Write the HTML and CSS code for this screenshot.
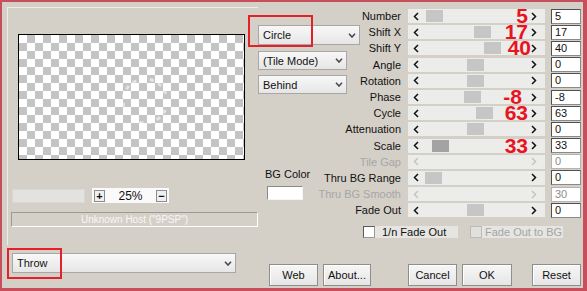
FILE: index.html
```html
<!DOCTYPE html>
<html lang="en">

<head>
    <meta charset="UTF-8">
    <title>Throw - Circle</title>
    <link rel="stylesheet" href="styles.css">
</head>

<body>

    <div class="dialog">
        <div class="left">
            <div class="panel">
                <div class="preview">
                    <svg class="preview-fx" width="225" height="124" viewBox="0 0 225 124">
                        <circle cx="126" cy="66" r="22" fill="none" stroke="#ffffff" stroke-opacity="0.55"
                            stroke-width="3" stroke-dasharray="4 5"></circle>
                    </svg>
                </div>
                <div class="zoom-row">
                    <div class="zoom-slider"></div>
                    <div class="zoom-field">
                        <span class="zoom-btn">+</span>
                        <span class="zoom-value">25%</span>
                        <span class="zoom-btn">&minus;</span>
                    </div>
                </div>
                <div class="host">Unknown Host ("9PSP")</div>
            </div>
            <div class="select select-throw">
                <span>Throw</span>
                <svg class="chev" width="8" height="5" viewBox="0 0 8 5"><path d="M1 0.8 L4 4 L7 0.8"></path></svg>
                <span class="mark mark-throw"></span>
            </div>
        </div>

        <div class="right">
            <div class="top">
                <div class="mid">
                    <div class="select select-circle">
                        <span>Circle</span>
                        <svg class="chev" width="8" height="5" viewBox="0 0 8 5"><path d="M1 0.8 L4 4 L7 0.8"></path></svg>
                        <span class="mark mark-circle"></span>
                    </div>
                    <div class="select select-small select-tile">
                        <span>(Tile Mode)</span>
                        <svg class="chev" width="8" height="5" viewBox="0 0 8 5"><path d="M1 0.8 L4 4 L7 0.8"></path></svg>
                    </div>
                    <div class="select select-small select-behind">
                        <span>Behind</span>
                        <svg class="chev" width="8" height="5" viewBox="0 0 8 5"><path d="M1 0.8 L4 4 L7 0.8"></path></svg>
                    </div>
                    <div class="bgcolor">
                        <div class="bgcolor-label">BG Color</div>
                        <div class="bgcolor-box"></div>
                    </div>
                </div>

                <div class="params">
                    <div class="lbl">Number</div>
                    <div class="track">
                        <svg class="arr arr-l" width="6" height="9" viewBox="0 0 6 9"><path d="M5 1 L1.5 4.5 L5 8"></path></svg>
                        <div class="track-mid"><span class="thumb" style="margin-left:7px"></span></div>
                        <svg class="arr arr-r" width="6" height="9" viewBox="0 0 6 9"><path d="M1 1 L4.5 4.5 L1 8"></path></svg>
                        <span class="note">5</span>
                    </div>
                    <div class="val">5</div>

                    <div class="lbl">Shift X</div>
                    <div class="track">
                        <svg class="arr arr-l" width="6" height="9" viewBox="0 0 6 9"><path d="M5 1 L1.5 4.5 L5 8"></path></svg>
                        <div class="track-mid"><span class="thumb" style="margin-left:55px"></span></div>
                        <svg class="arr arr-r" width="6" height="9" viewBox="0 0 6 9"><path d="M1 1 L4.5 4.5 L1 8"></path></svg>
                        <span class="note">17</span>
                    </div>
                    <div class="val">17</div>

                    <div class="lbl">Shift Y</div>
                    <div class="track">
                        <svg class="arr arr-l" width="6" height="9" viewBox="0 0 6 9"><path d="M5 1 L1.5 4.5 L5 8"></path></svg>
                        <div class="track-mid"><span class="thumb" style="margin-left:65px"></span></div>
                        <svg class="arr arr-r" width="6" height="9" viewBox="0 0 6 9"><path d="M1 1 L4.5 4.5 L1 8"></path></svg>
                        <span class="note note-far">40</span>
                    </div>
                    <div class="val">40</div>

                    <div class="lbl">Angle</div>
                    <div class="track">
                        <svg class="arr arr-l" width="6" height="9" viewBox="0 0 6 9"><path d="M5 1 L1.5 4.5 L5 8"></path></svg>
                        <div class="track-mid"><span class="thumb" style="margin-left:48px"></span></div>
                        <svg class="arr arr-r" width="6" height="9" viewBox="0 0 6 9"><path d="M1 1 L4.5 4.5 L1 8"></path></svg>
                    </div>
                    <div class="val">0</div>

                    <div class="lbl">Rotation</div>
                    <div class="track">
                        <svg class="arr arr-l" width="6" height="9" viewBox="0 0 6 9"><path d="M5 1 L1.5 4.5 L5 8"></path></svg>
                        <div class="track-mid"><span class="thumb" style="margin-left:48px"></span></div>
                        <svg class="arr arr-r" width="6" height="9" viewBox="0 0 6 9"><path d="M1 1 L4.5 4.5 L1 8"></path></svg>
                    </div>
                    <div class="val">0</div>

                    <div class="lbl">Phase</div>
                    <div class="track">
                        <svg class="arr arr-l" width="6" height="9" viewBox="0 0 6 9"><path d="M5 1 L1.5 4.5 L5 8"></path></svg>
                        <div class="track-mid"><span class="thumb" style="margin-left:45px"></span></div>
                        <svg class="arr arr-r" width="6" height="9" viewBox="0 0 6 9"><path d="M1 1 L4.5 4.5 L1 8"></path></svg>
                        <span class="note note-near">-8</span>
                    </div>
                    <div class="val">-8</div>

                    <div class="lbl">Cycle</div>
                    <div class="track">
                        <svg class="arr arr-l" width="6" height="9" viewBox="0 0 6 9"><path d="M5 1 L1.5 4.5 L5 8"></path></svg>
                        <div class="track-mid"><span class="thumb" style="margin-left:57px"></span></div>
                        <svg class="arr arr-r" width="6" height="9" viewBox="0 0 6 9"><path d="M1 1 L4.5 4.5 L1 8"></path></svg>
                        <span class="note">63</span>
                    </div>
                    <div class="val">63</div>

                    <div class="lbl">Attenuation</div>
                    <div class="track">
                        <svg class="arr arr-l" width="6" height="9" viewBox="0 0 6 9"><path d="M5 1 L1.5 4.5 L5 8"></path></svg>
                        <div class="track-mid"><span class="thumb" style="margin-left:48px"></span></div>
                        <svg class="arr arr-r" width="6" height="9" viewBox="0 0 6 9"><path d="M1 1 L4.5 4.5 L1 8"></path></svg>
                    </div>
                    <div class="val">0</div>

                    <div class="lbl">Scale</div>
                    <div class="track">
                        <svg class="arr arr-l" width="6" height="9" viewBox="0 0 6 9"><path d="M5 1 L1.5 4.5 L5 8"></path></svg>
                        <div class="track-mid"><span class="thumb thumb-focus" style="margin-left:13px"></span></div>
                        <svg class="arr arr-r" width="6" height="9" viewBox="0 0 6 9"><path d="M1 1 L4.5 4.5 L1 8"></path></svg>
                        <span class="note">33</span>
                    </div>
                    <div class="val">33</div>

                    <div class="lbl off">Tile Gap</div>
                    <div class="track off">
                        <svg class="arr arr-l" width="6" height="9" viewBox="0 0 6 9"><path d="M5 1 L1.5 4.5 L5 8"></path></svg>
                        <div class="track-mid"></div>
                        <svg class="arr arr-r" width="6" height="9" viewBox="0 0 6 9"><path d="M1 1 L4.5 4.5 L1 8"></path></svg>
                    </div>
                    <div class="val off">0</div>

                    <div class="lbl">Thru BG Range</div>
                    <div class="track">
                        <svg class="arr arr-l" width="6" height="9" viewBox="0 0 6 9"><path d="M5 1 L1.5 4.5 L5 8"></path></svg>
                        <div class="track-mid"><span class="thumb" style="margin-left:6px"></span></div>
                        <svg class="arr arr-r" width="6" height="9" viewBox="0 0 6 9"><path d="M1 1 L4.5 4.5 L1 8"></path></svg>
                    </div>
                    <div class="val">0</div>

                    <div class="lbl off">Thru BG Smooth</div>
                    <div class="track off">
                        <svg class="arr arr-l" width="6" height="9" viewBox="0 0 6 9"><path d="M5 1 L1.5 4.5 L5 8"></path></svg>
                        <div class="track-mid"></div>
                        <svg class="arr arr-r" width="6" height="9" viewBox="0 0 6 9"><path d="M1 1 L4.5 4.5 L1 8"></path></svg>
                    </div>
                    <div class="val off">30</div>

                    <div class="lbl">Fade Out</div>
                    <div class="track">
                        <svg class="arr arr-l" width="6" height="9" viewBox="0 0 6 9"><path d="M5 1 L1.5 4.5 L5 8"></path></svg>
                        <div class="track-mid"><span class="thumb" style="margin-left:48px"></span></div>
                        <svg class="arr arr-r" width="6" height="9" viewBox="0 0 6 9"><path d="M1 1 L4.5 4.5 L1 8"></path></svg>
                    </div>
                    <div class="val">0</div>
                </div>
            </div>

            <div class="checks">
                <span class="cb"></span>
                <span class="cb-label">1/n Fade Out</span>
                <span class="cb cb-off"></span>
                <span class="cb-label cb-label-off">Fade Out to BG</span>
            </div>

            <div class="buttons">
                <button class="btn btn-web">Web</button>
                <button class="btn btn-about">About...</button>
                <button class="btn btn-cancel">Cancel</button>
                <button class="btn btn-ok">OK</button>
                <button class="btn btn-reset">Reset</button>
            </div>
        </div>
    </div>

</body>

</html>
```

FILE: styles.css
```css
* {
    margin: 0;
    padding: 0;
    box-sizing: border-box;
}

body {
    font-family: "Liberation Sans", Arial, sans-serif;
    font-size: 11px;
    color: #111;
    background-color: #d4d0c8;
}

.dialog {
    width: 587px;
    height: 291px;
    display: flex;
    background-color: #d4d0c8;
    border: 2px solid #c64f5b;
    border-right-width: 4px;
    border-bottom-width: 3px;
}

/* left side: preview */

.left {
    width: 256px;
    flex-shrink: 0;
}

.panel {
    margin: 5px 0 0 5px;
    width: 251px;
    height: 238px;
    border-top: 1px solid #efede9;
    border-left: 1px solid #efede9;
}

.preview {
    margin: 26px 0 0 10px;
    width: 227px;
    height: 126px;
    border: 1px solid #000;
    background-color: #fff;
    background-image: repeating-conic-gradient(#c4c4c4 0 25%, #fff 0 50%);
    background-size: 16px 16px;
}

.preview-fx {
    display: block;
}

.zoom-row {
    display: flex;
    align-items: center;
    margin: 28px 0 0 4px;
    height: 15px;
}

.zoom-slider {
    width: 73px;
    height: 14px;
    background-color: #e4e2de;
    border: 1px solid #d9d7d3;
}

.zoom-field {
    display: flex;
    align-items: center;
    justify-content: space-between;
    margin-left: 7px;
    width: 77px;
    height: 15px;
    padding: 0 2px;
    background-color: #fafafa;
}

.zoom-btn {
    width: 11px;
    height: 12px;
    border: 1px solid #8c8c8c;
    background-color: #f0f0f0;
    font-size: 11px;
    font-weight: bold;
    line-height: 10px;
    text-align: center;
}

.zoom-value {
    font-size: 12px;
}

.host {
    margin: 9px 0 0 3px;
    width: 247px;
    height: 15px;
    border-top: 1px solid #9d9a93;
    border-left: 1px solid #9d9a93;
    border-right: 1px solid #fff;
    border-bottom: 1px solid #fff;
    color: #f7f7f7;
    font-size: 10px;
    line-height: 13px;
    text-align: center;
}

/* drop-down boxes */

.select {
    position: relative;
    display: flex;
    align-items: center;
    justify-content: space-between;
    height: 20px;
    padding: 0 3px 0 4px;
    border: 1px solid #a7a7a7;
    background: linear-gradient(#f8f8f8, #e6e6e6);
}

.select-throw {
    margin: 8px 0 0 10px;
    width: 224px;
}

.select-circle {
    width: 102px;
}

.select-small {
    width: 89px;
    height: 19px;
}

.select-tile {
    margin-top: 6px;
}

.select-behind {
    margin-top: 5px;
}

.chev path {
    fill: none;
    stroke: #4a4a4a;
    stroke-width: 1.6;
}

.mark {
    position: absolute;
    border: 2px solid #e4202a;
    pointer-events: none;
}

.mark-circle {
    left: -11px;
    top: -11px;
    width: 65px;
    height: 32px;
}

.mark-throw {
    left: -6px;
    top: -6px;
    width: 55px;
    height: 31px;
}

/* right side */

.right {
    flex: 1;
}

.top {
    display: grid;
    grid-template-columns: 62px 1fr;
}

.mid {
    padding-top: 23px;
}

.bgcolor {
    margin: 74px 0 0 7px;
    width: 41px;
}

.bgcolor-label {
    line-height: 13px;
    text-align: center;
    white-space: nowrap;
}

.bgcolor-box {
    margin: 5px 0 0 2px;
    width: 36px;
    height: 14px;
    background-color: #fff;
    border: 1px solid #f4f4f4;
    border-top-color: #8a8a8a;
    border-left-color: #8a8a8a;
}

.params {
    padding-top: 6px;
    display: grid;
    grid-template-columns: 88px 143px 30px;
    grid-auto-rows: 16.2px;
}

.lbl {
    display: flex;
    align-items: center;
    justify-content: flex-end;
    padding-right: 7px;
    white-space: nowrap;
}

.lbl.off {
    color: #a6a6a6;
}

.track {
    position: relative;
    align-self: center;
    display: flex;
    align-items: center;
    width: 137px;
    height: 14px;
    background-color: #ececeb;
}

.track-mid {
    flex: 1;
    display: flex;
    align-items: center;
    height: 12px;
}

.thumb {
    width: 17px;
    height: 12px;
    background-color: #c6c6c6;
}

.thumb-focus {
    background-color: #a3a3a3;
}

.arr path {
    fill: none;
    stroke: #111;
    stroke-width: 1.5;
}

.arr-l {
    margin-left: 5px;
}

.arr-r {
    margin-right: 8px;
}

.track.off .arr path {
    stroke: #c4c4c4;
}

.note {
    position: absolute;
    right: 17px;
    top: -1px;
    font-size: 21px;
    font-weight: bold;
    line-height: 16px;
    color: #e8141e;
}

.note-far {
    right: 14px;
}

.note-near {
    right: 23px;
}

.val {
    align-self: center;
    height: 15px;
    padding-left: 3px;
    line-height: 13px;
    background-color: #fff;
    border: 1px solid #8a8a8a;
    border-top-color: #505050;
    border-left-color: #505050;
}

.val.off {
    color: #8c8c8c;
    border-color: #b4b4b4;
}

/* check boxes */

.checks {
    display: flex;
    align-items: center;
    margin: 8px 0 0 105px;
    height: 12px;
}

.cb {
    width: 12px;
    height: 12px;
    background-color: #fff;
    border: 1px solid #9a9a9a;
    border-top-color: #5a5a5a;
    border-left-color: #5a5a5a;
}

.cb-off {
    margin-left: 12px;
    background-color: #e2e0dc;
    border-color: #bdbbb7;
}

.cb-label {
    width: 83px;
    height: 12px;
    padding-left: 7px;
    line-height: 12px;
    background-color: #e6e5e2;
    white-space: nowrap;
}

.cb-label-off {
    width: 81px;
    padding-left: 3px;
    color: #a4a4a4;
}

/* buttons */

.buttons {
    display: flex;
    margin: 26px 0 0 11px;
}

.btn {
    height: 22px;
    width: 49px;
    font-family: "Liberation Sans", Arial, sans-serif;
    font-size: 11px;
    color: #111;
    border: 1px solid #8e8e8e;
    background: linear-gradient(#f6f6f6, #e6e6e6);
    box-shadow: inset 1px 1px 0 #fff;
}

.btn-about {
    width: 48px;
    margin-left: 5px;
}

.btn-cancel {
    margin-left: 37px;
}

.btn-ok {
    width: 50px;
    margin-left: 5px;
}

.btn-reset {
    margin-left: 20px;
}
```
